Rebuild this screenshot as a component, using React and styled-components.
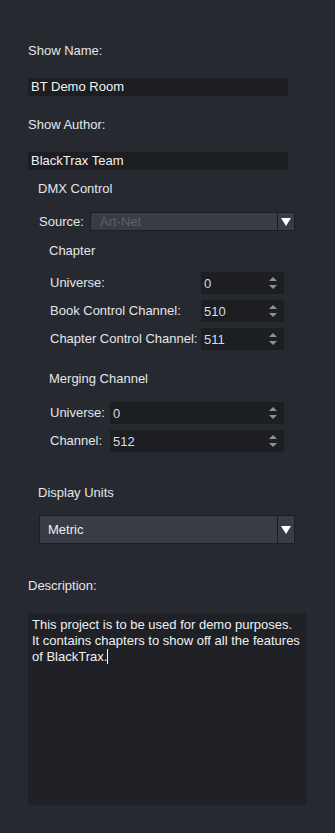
import React from "react";
import styled, { createGlobalStyle } from "styled-components";

const Global = createGlobalStyle`
  html, body {
    margin: 0;
    padding: 0;
    background: #262930;
  }
  body {
    font-family: "Liberation Sans", Arial, sans-serif;
    font-size: 13px;
    color: #e4e6ea;
  }
`;

const Page = styled.div`
  width: 335px;
  height: 833px;
  box-sizing: border-box;
  padding: 43px 0 0 28px;
  display: flex;
  flex-direction: column;
  overflow: hidden;
`;

const Label = styled.div`
  line-height: 16px;
  height: 16px;
  white-space: nowrap;
  margin-top: ${props => props.top || 0}px;
  margin-left: ${props => props.indent || 0}px;
`;

const LineEdit = styled.div`
  box-sizing: border-box;
  width: 260px;
  height: 18px;
  margin-top: ${props => props.top || 0}px;
  padding: 0 3px;
  background: #1c1e22;
  color: #f2f3f5;
  line-height: 18px;
`;

const Row = styled.div`
  display: flex;
  align-items: center;
  margin-top: ${props => props.top || 0}px;
  margin-left: ${props => props.indent || 0}px;
`;

const RowLabel = styled.div`
  width: ${props => props.width}px;
  white-space: nowrap;
  line-height: 16px;
`;

const Combo = styled.div`
  box-sizing: border-box;
  display: flex;
  width: ${props => props.width}px;
  height: ${props => props.height}px;
  background: #383c44;
  border: 1px solid #1b1d21;
`;

const ComboText = styled.div`
  flex: 1;
  display: flex;
  align-items: center;
  padding-left: ${props => props.pad}px;
  color: ${props => (props.disabled ? "#5b606a" : "#eef0f3")};
`;

const ComboButton = styled.div`
  width: 16px;
  border-left: 1px solid #1b1d21;
  display: flex;
  align-items: center;
  justify-content: center;
`;

const Triangle = styled.div`
  width: 0;
  height: 0;
  border-left: 5px solid transparent;
  border-right: 5px solid transparent;
  border-top: 8px solid #ffffff;
`;

const Spin = styled.div`
  box-sizing: border-box;
  display: flex;
  align-items: center;
  width: ${props => props.width}px;
  height: 22px;
  background: #1c1e22;
  padding: 0 7px 0 3px;
  color: #d6dce6;
`;

const SpinValue = styled.div`
  flex: 1;
`;

const Arrows = styled.div`
  display: flex;
  flex-direction: column;
  gap: 4px;
`;

const Arrow = styled.div`
  width: 0;
  height: 0;
  border-left: 4px solid transparent;
  border-right: 4px solid transparent;
  ${props =>
    props.up
      ? "border-bottom: 4px solid #8d9096;"
      : "border-top: 4px solid #8d9096;"}
`;

const TextArea = styled.div`
  box-sizing: border-box;
  width: 278px;
  height: 192px;
  margin-top: 19px;
  padding: 4px 4px;
  background: #1f2126;
  color: #f0f1f3;
  line-height: 16px;
`;

const Caret = styled.span`
  display: inline-block;
  width: 1px;
  height: 15px;
  background: #ffffff;
  vertical-align: -3px;
`;

function ComboBox({ value, width, height, pad, disabled }) {
  return (
    <Combo width={width} height={height}>
      <ComboText pad={pad} disabled={disabled}>
        {value}
      </ComboText>
      <ComboButton>
        <Triangle />
      </ComboButton>
    </Combo>
  );
}

function SpinBox({ value, width }) {
  return (
    <Spin width={width}>
      <SpinValue>{value}</SpinValue>
      <Arrows>
        <Arrow up />
        <Arrow />
      </Arrows>
    </Spin>
  );
}

export default function App() {
  return (
    <>
      <Global />
      <Page>
        <Label>Show Name:</Label>
        <LineEdit top={19}>BT Demo Room</LineEdit>
        <Label top={21}>Show Author:</Label>
        <LineEdit top={19}>BlackTrax Team</LineEdit>
        <Label top={11} indent={10}>
          DMX Control
        </Label>
        <Row top={15} indent={11}>
          <RowLabel width={51}>Source:</RowLabel>
          <ComboBox value="Art-Net" width={205} height={19} pad={9} disabled />
        </Row>
        <Label top={12} indent={21}>
          Chapter
        </Label>
        <Row top={13} indent={22}>
          <RowLabel width={151}>Universe:</RowLabel>
          <SpinBox value="0" width={83} />
        </Row>
        <Row top={6} indent={22}>
          <RowLabel width={151}>Book Control Channel:</RowLabel>
          <SpinBox value="510" width={83} />
        </Row>
        <Row top={6} indent={22}>
          <RowLabel width={151}>Chapter Control Channel:</RowLabel>
          <SpinBox value="511" width={83} />
        </Row>
        <Label top={21} indent={21}>
          Merging Channel
        </Label>
        <Row top={15} indent={22}>
          <RowLabel width={60}>Universe:</RowLabel>
          <SpinBox value="0" width={174} />
        </Row>
        <Row top={6} indent={22}>
          <RowLabel width={60}>Channel:</RowLabel>
          <SpinBox value="512" width={174} />
        </Row>
        <Label top={33} indent={10}>
          Display Units
        </Label>
        <Row top={14} indent={11}>
          <ComboBox value="Metric" width={256} height={29} pad={8} />
        </Row>
        <Label top={34}>Description:</Label>
        <TextArea>
          This project is to be used for demo purposes.
          <br />
          It contains chapters to show off all the features
          <br />
          of BlackTrax.
          <Caret />
        </TextArea>
      </Page>
    </>
  );
}
